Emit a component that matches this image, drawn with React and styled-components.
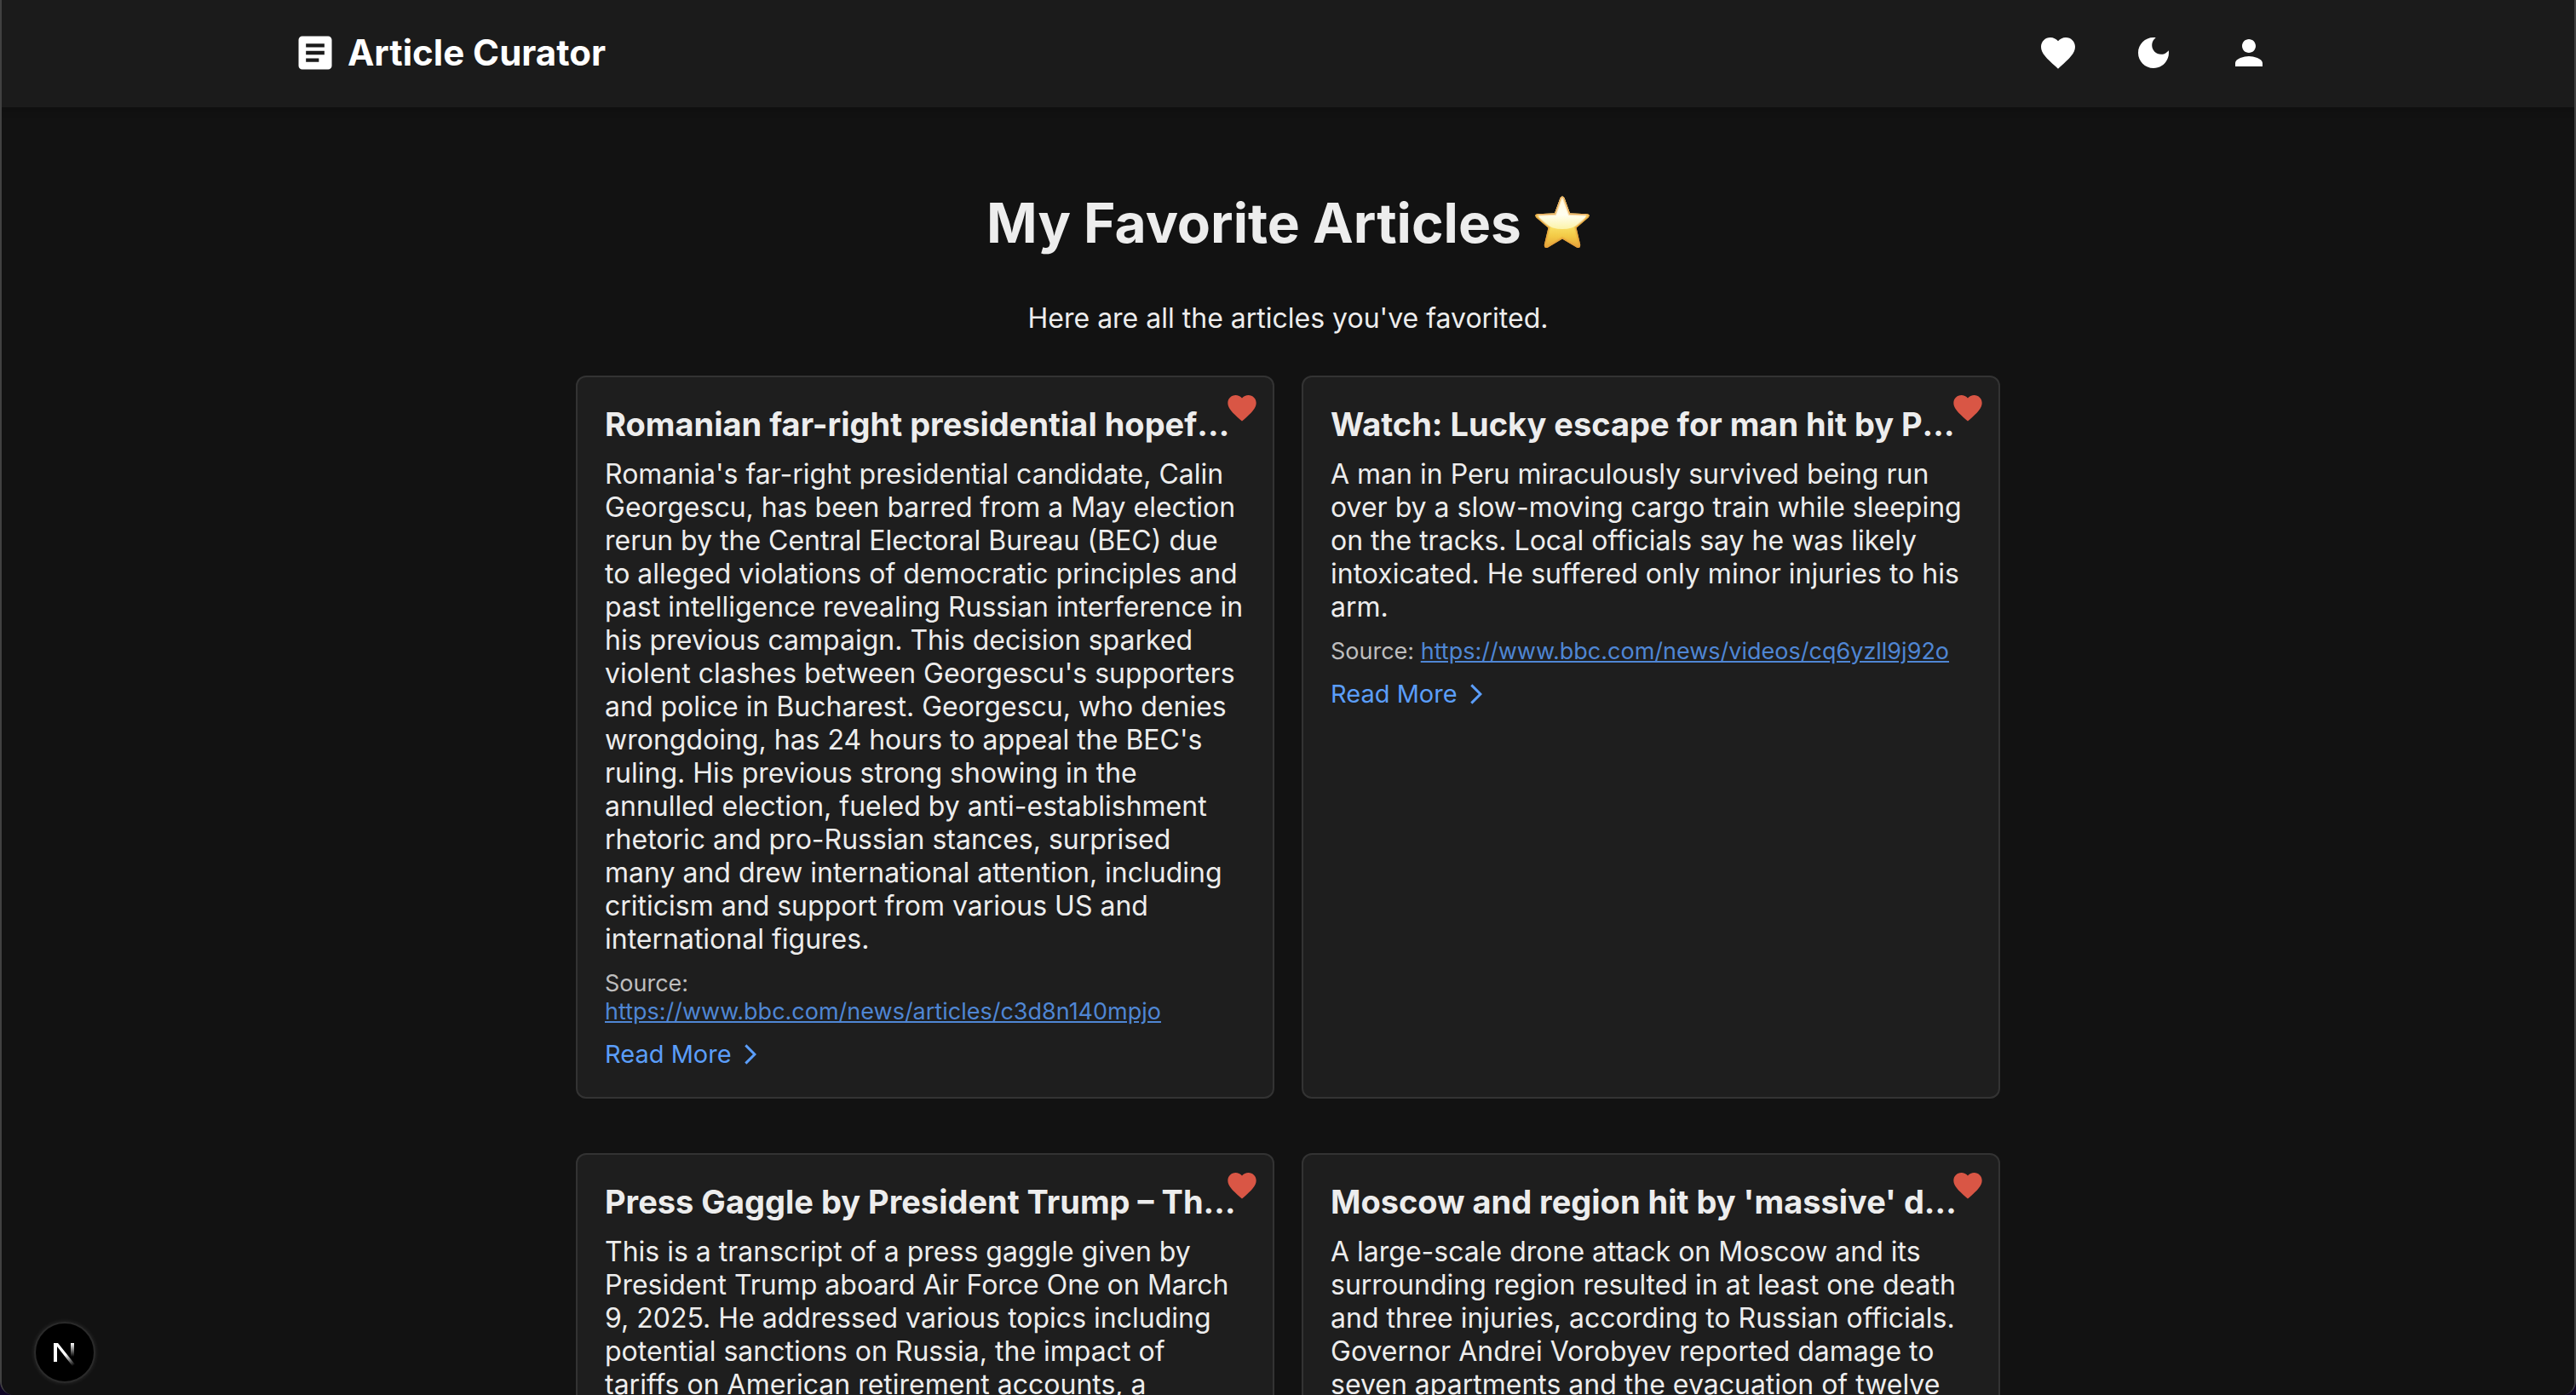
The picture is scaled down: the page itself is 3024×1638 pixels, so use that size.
import React from "react";
import styled, { createGlobalStyle } from "styled-components";

const GlobalStyle = createGlobalStyle`
  *, *::before, *::after { box-sizing: border-box; }
  html { background: #0f0524; }
  body {
    margin: 0;
    color: #ededed;
    font-family: Inter, "Liberation Sans", Arial, sans-serif;
    font-size: 32px;
    line-height: 39px;
    -webkit-font-smoothing: antialiased;
  }
`;

const Window = styled.div`
  height: 100vh;
  overflow-x: hidden;
  overflow-y: auto;
  scrollbar-width: none;
  background: #121212;
  border: solid #414141;
  border-width: 0 2px;
  border-radius: 0 0 16px 16px;
`;

const Header = styled.header`
  background: #1b1b1b;
  box-shadow: 0 4px 8px rgba(0, 0, 0, 0.2);
`;

const HeaderInner = styled.div`
  max-width: 2400px;
  margin: 0 auto;
  padding: 22px 32px 24px;
  display: flex;
  align-items: center;
  justify-content: space-between;
`;

const Brand = styled.a`
  display: flex;
  align-items: center;
  gap: 12px;
  color: #fff;
  font-size: 42px;
  line-height: 52px;
  font-weight: 700;
  text-decoration: none;
`;

const Nav = styled.nav`
  display: flex;
  gap: 32px;
`;

const IconButton = styled.button`
  display: flex;
  padding: 16px;
  border: 0;
  background: none;
  color: #fff;
  cursor: pointer;
`;

const Glyph = styled.svg`
  display: block;
  flex: none;
  width: ${(p) => p.$size}px;
  height: ${(p) => p.$size}px;
  fill: currentColor;
`;

const Main = styled.main`
  max-width: 1800px;
  margin: 0 auto;
  padding: 96px 64px;
`;

const Title = styled.h1`
  display: flex;
  justify-content: center;
  align-items: center;
  gap: 16px;
  margin: 0;
  font-size: 64px;
  line-height: 80px;
  font-weight: 700;
`;

const Intro = styled.p`
  margin: 52px 0 48px;
  text-align: center;
`;

const Grid = styled.div`
  display: grid;
  grid-template-columns: repeat(2, minmax(0, 1fr));
  gap: 64px 32px;
`;

const Card = styled.article`
  position: relative;
  padding: 32px;
  background: #1e1e1e;
  border: 2px solid #333;
  border-radius: 12px;
`;

const FavoriteButton = styled.button`
  position: absolute;
  top: 16px;
  right: 16px;
  display: flex;
  padding: 0;
  border: 0;
  background: none;
  color: #d95645;
  cursor: pointer;
`;

const CardTitle = styled.h2`
  margin: 0 8px 16px 0;
  overflow: hidden;
  white-space: nowrap;
  text-overflow: ellipsis;
  font-size: 38px;
  line-height: 46px;
  font-weight: 700;
`;

const Summary = styled.p`
  margin: 0 0 16px;
`;

const Source = styled.p`
  margin: 0 0 16px;
  color: #bebebe;
  font-size: 27px;
  line-height: 33px;

  a { color: #4f86d4; }
`;

const ReadMore = styled.a`
  display: flex;
  width: fit-content;
  align-items: center;
  gap: 8px;
  color: #5b9efa;
  font-size: 29px;
  line-height: 36px;
  text-decoration: none;
`;

const DevBadge = styled.button`
  position: fixed;
  left: 40px;
  bottom: 14px;
  width: 72px;
  height: 72px;
  padding: 0;
  border: 2px solid #2a2a2a;
  border-radius: 50%;
  background: #000;
  display: grid;
  place-items: center;
  box-shadow: 0 0 4px 1px rgba(255, 255, 255, 0.08);
`;

const BadgeLogo = styled.svg`
  display: block;
  width: 26px;
  height: 22px;
  overflow: visible;
`;

const StarGlyph = styled.svg`
  display: block;
  flex: none;
  width: 64px;
  height: 64px;
`;

const HEART =
  "m12 21.35-1.45-1.32C5.4 15.36 2 12.28 2 8.5 2 5.42 4.42 3 7.5 3c1.74 0 3.41.81 4.5 2.09C13.09 3.81 14.76 3 16.5 3 19.58 3 22 5.42 22 8.5c0 3.78-3.4 6.86-8.55 11.54z";
const ARTICLE =
  "M19 3H5c-1.1 0-2 .9-2 2v14c0 1.1.9 2 2 2h14c1.1 0 2-.9 2-2V5c0-1.1-.9-2-2-2m-5 14H7v-2h7zm3-4H7v-2h10zm0-4H7V7h10z";
const MOON =
  "M12 3c-4.97 0-9 4.03-9 9s4.03 9 9 9 9-4.03 9-9c0-.46-.04-.92-.1-1.36-.98 1.37-2.58 2.26-4.4 2.26-2.98 0-5.4-2.42-5.4-5.4 0-1.81.89-3.42 2.26-4.4-.44-.06-.9-.1-1.36-.1";
const PERSON =
  "M12 12c2.21 0 4-1.79 4-4s-1.79-4-4-4-4 1.79-4 4 1.79 4 4 4m0 2c-2.67 0-8 1.34-8 4v2h16v-2c0-2.66-5.33-4-8-4";
const CHEVRON = "M6.23 20.23 8 22l10-10L8 2 6.23 3.77 14.46 12z";
const STAR =
  "M29.6 2.2 Q32 -1 34.4 2.2 L41 20.500 L61.500 21.2 Q65.500 22.2 62.5 25.5 L48.5 37.500 L53.2 57.500 Q53 62.500 48.8 60.500 L32 50.500 L15.2 60.500 Q11 62.500 10.8 57.500 L15.5 37.500 L1.5 25.5 Q-1.500 22.2 2.500 21.2 L23 20.500 Z";

function Icon({ path, size = 48 }) {
  return (
    <Glyph $size={size} viewBox="0 0 24 24" aria-hidden="true">
      <path d={path} />
    </Glyph>
  );
}

function Star() {
  return (
    <StarGlyph viewBox="0 0 64 64" role="img" aria-label="star">
      <defs>
        <linearGradient id="starBody" x1="0" y1="0" x2="0" y2="1">
          <stop offset="0" stopColor="#fbe9a8" />
          <stop offset="0.6" stopColor="#f8de62" />
          <stop offset="0.78" stopColor="#f3c945" />
          <stop offset="1" stopColor="#e5a23a" />
        </linearGradient>
        <linearGradient id="starGloss" x1="0" y1="0" x2="0" y2="1">
          <stop offset="0" stopColor="#fff8dc" />
          <stop offset="0.6" stopColor="#fffef0" />
          <stop offset="1" stopColor="#fcf3a8" />
        </linearGradient>
        <clipPath id="starClip">
          <path d={STAR} />
        </clipPath>
      </defs>
      <path d={STAR} fill="url(#starBody)" />
      <g clipPath="url(#starClip)">
        <ellipse cx="32" cy="18" rx="29" ry="21" fill="url(#starGloss)" />
        <path d={STAR} fill="none" stroke="#e8a640" strokeWidth="5" strokeOpacity="0.35" />
        <path d={STAR} fill="none" stroke="#e39c3a" strokeWidth="2.500" strokeOpacity="0.8" />
      </g>
    </StarGlyph>
  );
}

function NextLogo() {
  return (
    <BadgeLogo viewBox="2 2 26 22" aria-hidden="true">
      <defs>
        <linearGradient id="nDiagonal" x1="15" y1="16" x2="25" y2="29" gradientUnits="userSpaceOnUse">
          <stop stopColor="#fff" />
          <stop offset="1" stopColor="#fff" stopOpacity="0" />
        </linearGradient>
        <linearGradient id="nStem" x1="0" y1="2" x2="0" y2="18" gradientUnits="userSpaceOnUse">
          <stop stopColor="#fff" />
          <stop offset="1" stopColor="#fff" stopOpacity="0" />
        </linearGradient>
      </defs>
      <path d="M2 2h4v22H2z" fill="#fff" />
      <path d="M2 2h5l20 25-3 2L6 6z" fill="url(#nDiagonal)" />
      <path d="M22 2h4v16h-4z" fill="url(#nStem)" />
    </BadgeLogo>
  );
}

const ARTICLES = [
  {
    title: "Romanian far-right presidential hopeful barred from election rerun",
    summary:
      "Romania's far-right presidential candidate, Calin Georgescu, has been barred from a May election rerun by the Central Electoral Bureau (BEC) due to alleged violations of democratic principles and past intelligence revealing Russian interference in his previous campaign. This decision sparked violent clashes between Georgescu's supporters and police in Bucharest. Georgescu, who denies wrongdoing, has 24 hours to appeal the BEC's ruling. His previous strong showing in the annulled election, fueled by anti-establishment rhetoric and pro-Russian stances, surprised many and drew international attention, including criticism and support from various US and international figures.",
    url: "https://www.bbc.com/news/articles/c3d8n140mpjo",
  },
  {
    title: "Watch: Lucky escape for man hit by Peru train",
    summary:
      "A man in Peru miraculously survived being run over by a slow-moving cargo train while sleeping on the tracks. Local officials say he was likely intoxicated. He suffered only minor injuries to his arm.",
    url: "https://www.bbc.com/news/videos/cq6yzll9j92o",
  },
  {
    title: "Press Gaggle by President Trump – The White House",
    summary:
      "This is a transcript of a press gaggle given by President Trump aboard Air Force One on March 9, 2025. He addressed various topics including potential sanctions on Russia, the impact of tariffs on American retirement accounts, a",
  },
  {
    title: "Moscow and region hit by 'massive' drone attack",
    summary:
      "A large-scale drone attack on Moscow and its surrounding region resulted in at least one death and three injuries, according to Russian officials. Governor Andrei Vorobyev reported damage to seven apartments and the evacuation of twelve",
  },
];

function ArticleCard({ title, summary, url }) {
  return (
    <Card>
      <CardTitle>{title}</CardTitle>
      <Summary>{summary}</Summary>
      {url && (
        <>
          <Source>
            Source: <a href={url}>{url}</a>
          </Source>
          <ReadMore href={url}>
            Read More
            <Icon path={CHEVRON} size={28} />
          </ReadMore>
        </>
      )}
      <FavoriteButton type="button" aria-label="Remove from favorites">
        <Icon path={HEART} size={40} />
      </FavoriteButton>
    </Card>
  );
}

export default function App() {
  return (
    <Window>
      <GlobalStyle />
      <Header>
        <HeaderInner>
          <Brand href="#">
            <Icon path={ARTICLE} size={52} />
            Article Curator
          </Brand>
          <Nav aria-label="Account">
            <IconButton type="button" aria-label="Favorites"><Icon path={HEART} /></IconButton>
            <IconButton type="button" aria-label="Toggle theme"><Icon path={MOON} /></IconButton>
            <IconButton type="button" aria-label="Profile"><Icon path={PERSON} /></IconButton>
          </Nav>
        </HeaderInner>
      </Header>
      <Main>
        <Title>
          My Favorite Articles
          <Star />
        </Title>
        <Intro>Here are all the articles you've favorited.</Intro>
        <Grid>
          {ARTICLES.map((article) => (
            <ArticleCard key={article.title} {...article} />
          ))}
        </Grid>
      </Main>
      <DevBadge type="button" aria-label="Open developer tools">
        <NextLogo />
      </DevBadge>
    </Window>
  );
}
